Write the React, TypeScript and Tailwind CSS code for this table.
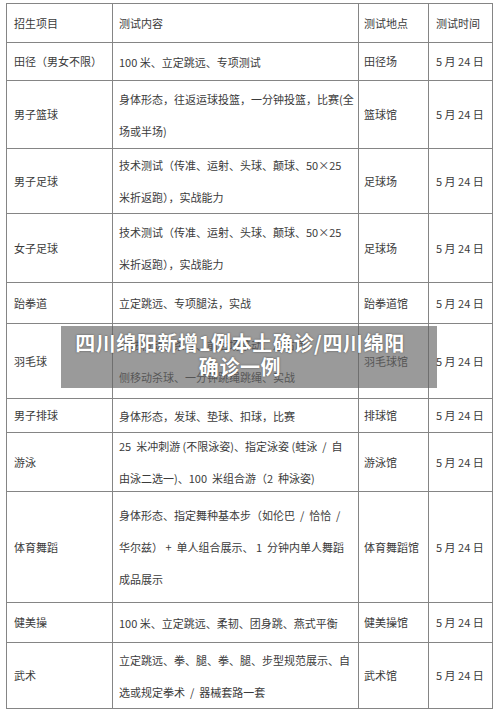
import React from "react";

type Row = { name: string; content: string[]; place: string; h: number };

const rows: Row[] = [
  { name: "田径（男女不限）", content: ["100 米、立定跳远、专项测试"], place: "田径场", h: 38 },
  { name: "男子篮球", content: ["身体形态，往返运球投篮，一分钟投篮，比赛(全", "场或半场)"], place: "篮球馆", h: 68 },
  { name: "男子足球", content: ["技术测试（传准、运射、头球、颠球、50×25", "米折返跑），实战能力"], place: "足球场", h: 65 },
  { name: "女子足球", content: ["技术测试（传准、运射、头球、颠球、50×25", "米折返跑），实战能力"], place: "足球场", h: 69 },
  { name: "跆拳道", content: ["立定跳远、专项腿法，实战"], place: "跆拳道馆", h: 41 },
  { name: "羽毛球", content: ["步法移动、杀球、前后场移动、左右两", "侧移动杀球、一分钟跳绳跳绳、实战"], place: "羽毛球馆", h: 75 },
  { name: "男子排球", content: ["身体形态，发球、垫球、扣球，比赛"], place: "排球馆", h: 34 },
  { name: "游泳", content: ["25  米冲刺游 (不限泳姿)、指定泳姿 (蛙泳  /  自", "由泳二选一)、100  米组合游（2  种泳姿)"], place: "游泳馆", h: 58 },
  { name: "体育舞蹈", content: ["身体形态、指定舞种基本步（如伦巴  /  恰恰  /", "华尔兹） +  单人组合展示、 1  分钟内单人舞蹈", "成品展示"], place: "体育舞蹈馆", h: 111 },
  { name: "健美操", content: ["100 米、立定跳远、柔韧、团身跳、燕式平衡"], place: "健美操馆", h: 40 },
  { name: "武术", content: ["立定跳远、拳、腿、拳、腿、步型规范展示、自", "选或规定拳术  /  器械套路一套"], place: "武术馆", h: 66 },
];

const cell = "border border-[#858585] align-middle";

export default function App() {
  return (
    <div
      className="relative w-[500px] h-[715px] bg-white overflow-hidden pt-[3px] pl-[6px] text-[#3b3b3b] text-[11px]"
      style={{ fontFamily: '"Noto Sans CJK SC", "Noto Sans", sans-serif' }}
    >
      <table className="w-[486px] border-collapse table-fixed">
        <colgroup>
          <col className="w-[106px]" />
          <col className="w-[246px]" />
          <col className="w-[70px]" />
          <col className="w-[64px]" />
        </colgroup>
        <tbody>
          <tr className="h-[39px]">
            <td className={`${cell} pl-[7px]`}>招生项目</td>
            <td className={`${cell} pl-[6px]`}>测试内容</td>
            <td className={`${cell} pl-[5px]`}>测试地点</td>
            <td className={`${cell} pl-[7px]`}>测试时间</td>
          </tr>
          {rows.map((r) => (
            <tr key={r.name} style={{ height: r.h }}>
              <td className={`${cell} pl-[7px]`}>{r.name}</td>
              <td className={`${cell} pl-[6px]`}>
                <div className="flex flex-col gap-[6px]">
                  {r.content.map((l, i) => (
                    <div key={i} className="whitespace-pre h-[26px] leading-[26px]">
                      {l}
                    </div>
                  ))}
                </div>
              </td>
              <td className={`${cell} pl-[5px]`}>{r.place}</td>
              <td className={`${cell} pl-[7px] whitespace-nowrap`}>5 月 24 日</td>
            </tr>
          ))}
        </tbody>
      </table>
      <div className="absolute left-[61px] top-[326px] w-[376px] h-[62px] bg-[rgba(100,100,100,0.65)] pt-[5px] pr-[18px] text-center text-white font-bold text-[20px] leading-[24px] tracking-[0.6px] [text-shadow:0_0_2px_rgba(0,0,0,0.5)]">
        <div className="whitespace-nowrap">四川绵阳新增1例本土确诊/四川绵阳</div>
        <div>确诊一例</div>
      </div>
    </div>
  );
}
